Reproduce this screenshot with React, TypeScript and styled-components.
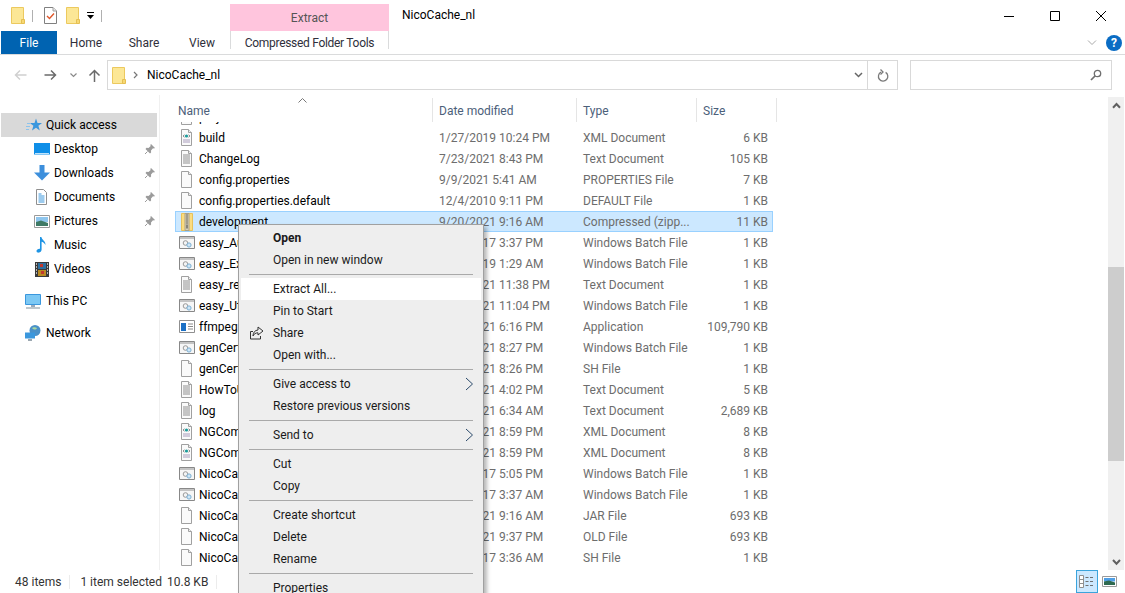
import React from 'react';
import styled, { createGlobalStyle } from 'styled-components';

const GlobalStyle = createGlobalStyle`
  html, body {
    margin: 0;
    padding: 0;
    background: #fff;
    overflow: hidden;
  }
  * { box-sizing: border-box; }
`;

type FileKind = 'xml' | 'text' | 'blank' | 'zip' | 'bat' | 'exe';

type FileRow = {
  name: string;
  date: string;
  type: string;
  size: string;
  kind: FileKind;
  selected?: boolean;
};

const files: FileRow[] = [
  { name: 'project', date: '', type: '', size: '', kind: 'xml' },
  { name: 'build', date: '1/27/2019 10:24 PM', type: 'XML Document', size: '6 KB', kind: 'xml' },
  { name: 'ChangeLog', date: '7/23/2021 8:43 PM', type: 'Text Document', size: '105 KB', kind: 'text' },
  { name: 'config.properties', date: '9/9/2021 5:41 AM', type: 'PROPERTIES File', size: '7 KB', kind: 'blank' },
  { name: 'config.properties.default', date: '12/4/2010 9:11 PM', type: 'DEFAULT File', size: '1 KB', kind: 'blank' },
  { name: 'development', date: '9/20/2021 9:16 AM', type: 'Compressed (zipp...', size: '11 KB', kind: 'zip', selected: true },
  { name: 'easy_Auto', date: '1/24/2017 3:37 PM', type: 'Windows Batch File', size: '1 KB', kind: 'bat' },
  { name: 'easy_Exec', date: '2/28/2019 1:29 AM', type: 'Windows Batch File', size: '1 KB', kind: 'bat' },
  { name: 'easy_readme', date: '3/11/2021 11:38 PM', type: 'Text Document', size: '1 KB', kind: 'text' },
  { name: 'easy_Util', date: '3/11/2021 11:04 PM', type: 'Windows Batch File', size: '1 KB', kind: 'bat' },
  { name: 'ffmpeg', date: '8/11/2021 6:16 PM', type: 'Application', size: '109,790 KB', kind: 'exe' },
  { name: 'genCert', date: '6/21/2021 8:27 PM', type: 'Windows Batch File', size: '1 KB', kind: 'bat' },
  { name: 'genCert', date: '6/21/2021 8:26 PM', type: 'SH File', size: '1 KB', kind: 'blank' },
  { name: 'HowToUse', date: '5/11/2021 4:02 PM', type: 'Text Document', size: '5 KB', kind: 'text' },
  { name: 'log', date: '9/21/2021 6:34 AM', type: 'Text Document', size: '2,689 KB', kind: 'text' },
  { name: 'NGCom', date: '7/21/2021 8:59 PM', type: 'XML Document', size: '8 KB', kind: 'xml' },
  { name: 'NGCom', date: '7/21/2021 8:59 PM', type: 'XML Document', size: '8 KB', kind: 'xml' },
  { name: 'NicoCache', date: '1/24/2017 5:05 PM', type: 'Windows Batch File', size: '1 KB', kind: 'bat' },
  { name: 'NicoCache', date: '1/24/2017 3:37 AM', type: 'Windows Batch File', size: '1 KB', kind: 'bat' },
  { name: 'NicoCache', date: '9/20/2021 9:16 AM', type: 'JAR File', size: '693 KB', kind: 'blank' },
  { name: 'NicoCache', date: '9/19/2021 9:37 PM', type: 'OLD File', size: '693 KB', kind: 'blank' },
  { name: 'NicoCache', date: '1/24/2017 3:36 AM', type: 'SH File', size: '1 KB', kind: 'blank' },
];

const FolderIcon = () => (
  <svg width="14" height="17" viewBox="0 0 14 17">
    <path d="M.5.500h12v16H.5z" fill="#fce796" stroke="#ecc95e" />
    <path d="M10.500 12.500h3v4h-3z" fill="#f7d873" stroke="#e5bf52" />
  </svg>
);

const CheckDocIcon = () => (
  <svg width="13" height="17" viewBox="0 0 13 17">
    <path d="M.5.500h8.500l3.500 3.500v12.500H.5z" fill="#fff" stroke="#808080" />
    <path d="M9 .5v3.500h3.500" fill="#e8e8e8" stroke="#a0a0a0" />
    <path d="M3 9l2.500 2.500L10 6.500" fill="none" stroke="#e0562a" strokeWidth="1.400" />
  </svg>
);

const FileIcon = ({ kind }: { kind: FileKind }) => {
  if (kind === 'zip') {
    return (
      <svg width="14" height="18" viewBox="0 0 14 18">
        <path d="M2.500.5h11v17h-11z" fill="#fbdc80" stroke="#e8c25a" />
        <path d="M6 .5h4v17H6z" fill="#d8d0b8" stroke="#a8a08a" />
        <path d="M7 2h2M7 4h2M7 6h2M7 8h2M7 10h2" stroke="#6f6a5c" />
        <path d="M7 11.500h2v4H7z" fill="#8a8578" />
      </svg>
    );
  }
  if (kind === 'bat') {
    return (
      <svg width="16" height="14" viewBox="0 0 16 14">
        <path d="M.5.500h15v12h-15z" fill="#f6f6f6" stroke="#888" />
        <path d="M1 1h14v2H1z" fill="#c4c4c4" />
        <circle cx="6.500" cy="7" r="2.300" fill="#f4f4f4" stroke="#9a9a9a" />
        <circle cx="10" cy="9" r="2.100" fill="#cfe6f6" stroke="#7cb0d4" />
      </svg>
    );
  }
  if (kind === 'exe') {
    return (
      <svg width="16" height="14" viewBox="0 0 16 14">
        <path d="M.5.500h15v12H.5z" fill="#fff" stroke="#8f8f8f" />
        <path d="M2 3h5v8H2z" fill="#1b6fc4" />
        <path d="M9 4h5M9 6.500h5M9 9h5" stroke="#8a8a8a" />
      </svg>
    );
  }
  return (
    <svg width="14" height="17" viewBox="0 0 14 17">
      <path d="M2.500.5h7l3 3v13h-10z" fill="#fafafa" stroke="#a0a0a0" />
      <path d="M9.500.5v3h3" fill="#eee" stroke="#a0a0a0" />
      {kind === 'text' && <path d="M4 5h7M4 7h7M4 9h7M4 11h7M4 13h7" stroke="#8f8f8f" />}
      {kind === 'xml' && (
        <>
          <path d="M4 11h7M4 13h7" stroke="#a89cbc" />
          <path d="M4 7l1.500-1.200M4 7l1.500 1.200M11 7L9.500 5.800M11 7L9.500 8.200" stroke="#8a8a8a" />
          <circle cx="7.500" cy="7" r="1.600" fill="#1c9b9b" />
        </>
      )}
    </svg>
  );
};

const PinIcon = () => (
  <svg width="12" height="12" viewBox="0 0 12 12">
    <path d="M7 1l4 4-1 .6-1-.4-2 2.200.1 2L6 10.500 1.500 6l1-1.200 2 .1 2.200-2-.4-1z" fill="#9b9b9b" />
    <path d="M3.500 8.500L1 11" stroke="#9b9b9b" />
  </svg>
);

const ChevronRight = () => (
  <svg width="9" height="14" viewBox="0 0 9 14">
    <path d="M1 1l6.500 6L1 13" fill="none" stroke="#2b4a6b" strokeWidth="1" />
  </svg>
);

const navEntries = [
  {
    label: 'Desktop',
    pinned: true,
    icon: (
      <svg width="16" height="14" viewBox="0 0 16 14">
        <path d="M0 1h16v11.500H0z" fill="#0f8fe8" />
        <path d="M1 11h14v1H1z" fill="#bfe3fb" />
      </svg>
    ),
  },
  {
    label: 'Downloads',
    pinned: true,
    icon: (
      <svg width="16" height="16" viewBox="0 0 16 16">
        <path d="M5.500 0h5v7.500H16L8 15.500 0 7.500h5.500z" fill="#3d8fdc" />
      </svg>
    ),
  },
  {
    label: 'Documents',
    pinned: true,
    icon: (
      <svg width="13" height="16" viewBox="0 0 13 16">
        <path d="M1.500.5h7l3 3v12h-10z" fill="#fff" stroke="#8f8f8f" />
        <path d="M3.500 5h3M3.500 7h6M3.500 9h6M3.500 11h6M3.500 13h6" stroke="#3a97dd" />
      </svg>
    ),
  },
  {
    label: 'Pictures',
    pinned: true,
    icon: (
      <svg width="16" height="13" viewBox="0 0 16 13">
        <path d="M.5.500h15v12H.5z" fill="#fff" stroke="#9a9a9a" />
        <path d="M2 2h12v5H2z" fill="#8fc6ee" />
        <path d="M2 7l5-1.500L14 8v3H2z" fill="#3f7a66" />
      </svg>
    ),
  },
  {
    label: 'Music',
    pinned: false,
    icon: (
      <svg width="14" height="16" viewBox="0 0 14 16">
        <path d="M5 0h1.400c.4 3 4.600 4 4 8-.8-2-2.600-3-3.800-3.200V12.600C6.600 14.600 4.800 16 3 15.600 1.200 15.200 1 13.400 2.400 12.400 3.200 11.800 4.200 11.600 5 11.800z" fill="#1e94e4" />
      </svg>
    ),
  },
  {
    label: 'Videos',
    pinned: false,
    icon: (
      <svg width="14" height="15" viewBox="0 0 14 15">
        <path d="M0 0h14v15H0z" fill="#3a3a3a" />
        <path d="M3 1h8v6H3z" fill="#2f6f9f" />
        <path d="M3 8h8v6H3z" fill="#b98a22" />
        <path d="M5 2h3v3H5zM6 9h3v3H6z" fill="#c2382c" />
        <path d="M1 2h1M1 5h1M1 8h1M1 11h1M12 2h1M12 5h1M12 8h1M12 11h1" stroke="#ddd" strokeWidth="1.400" />
      </svg>
    ),
  },
];

const App = () => {
  return (
    <Page>
      <GlobalStyle />
      <TitleBar>
        <QuickAccess>
          <FolderIcon />
          <QatBar />
          <QatCheck><CheckDocIcon /></QatCheck>
          <FolderIcon />
          <svg width="7" height="8" viewBox="0 0 7 8">
            <path d="M0 .5h7" stroke="#000" />
            <path d="M0 3h7L3.500 7z" fill="#000" />
          </svg>
          <QatBar />
        </QuickAccess>
        <ContextHeader>Extract</ContextHeader>
        <WindowTitle>NicoCache_nl</WindowTitle>
        <WindowButtons>
          <WindowButton>
            <svg width="10" height="10" viewBox="0 0 10 10"><path d="M0 5.500h10" stroke="#000" /></svg>
          </WindowButton>
          <WindowButton>
            <svg width="10" height="10" viewBox="0 0 10 10"><path d="M.5.500h9v9h-9z" fill="none" stroke="#000" /></svg>
          </WindowButton>
          <WindowButton>
            <svg width="10" height="10" viewBox="0 0 10 10"><path d="M0 0l10 10M10 0L0 10" stroke="#000" /></svg>
          </WindowButton>
        </WindowButtons>
      </TitleBar>

      <RibbonTabs>
        <FileTab>File</FileTab>
        <RibbonTab>Home</RibbonTab>
        <RibbonTab>Share</RibbonTab>
        <RibbonTab>View</RibbonTab>
        <ContextTab>Compressed Folder Tools</ContextTab>
        <RibbonRight>
          <svg width="10" height="6" viewBox="0 0 10 6">
            <path d="M1 .5l4 4 4-4" fill="none" stroke="#a8a8a8" />
          </svg>
          <HelpBadge>?</HelpBadge>
        </RibbonRight>
      </RibbonTabs>

      <AddressRow>
        <NavButtons>
          <svg width="13" height="12" viewBox="0 0 13 12">
            <path d="M12.500 6H1.500M6 1.500L1.500 6 6 10.500" fill="none" stroke="#d0d0d0" strokeWidth="1.500" />
          </svg>
          <NavForward>
            <svg width="13" height="12" viewBox="0 0 13 12">
              <path d="M.5 6h11M7 1.500L11.500 6 7 10.500" fill="none" stroke="#6b6b6b" strokeWidth="1.500" />
            </svg>
          </NavForward>
          <svg width="7" height="5" viewBox="0 0 7 5">
            <path d="M.5.500L3.500 3.500 6.500.500" fill="none" stroke="#8a8a8a" strokeWidth="1.200" />
          </svg>
          <svg width="13" height="13" viewBox="0 0 13 13">
            <path d="M6.500 13V1.500M1.500 6.500l5-5 5 5" fill="none" stroke="#6b6b6b" strokeWidth="1.500" />
          </svg>
        </NavButtons>
        <AddressBox>
          <FolderIcon />
          <svg width="5" height="8" viewBox="0 0 5 8">
            <path d="M1 1l3 3-3 3" fill="none" stroke="#777" strokeWidth="1.200" />
          </svg>
          <AddressText>NicoCache_nl</AddressText>
          <AddressEnd>
            <svg width="9" height="6" viewBox="0 0 9 6">
              <path d="M1 1l3.500 3.500L8 1" fill="none" stroke="#666" strokeWidth="1.500" />
            </svg>
          </AddressEnd>
          <RefreshCell>
            <svg width="12" height="13" viewBox="0 0 12 13">
              <path d="M4 3.200A4.700 4.700 0 1 0 8.600 3.400" fill="none" stroke="#7a7a7a" strokeWidth="1.300" />
              <path d="M3.500.5L6 3 3.500 5.500" fill="none" stroke="#7a7a7a" strokeWidth="1.300" />
            </svg>
          </RefreshCell>
        </AddressBox>
        <SearchBox>
          <svg width="12" height="12" viewBox="0 0 12 12">
            <circle cx="7.500" cy="4.500" r="3.200" fill="none" stroke="#6f6f6f" strokeWidth="1.300" />
            <path d="M5 7L1 11" stroke="#6f6f6f" strokeWidth="1.700" />
          </svg>
        </SearchBox>
      </AddressRow>

      <MainArea>
        <Sidebar>
          <QuickRow>
            <svg width="16" height="15" viewBox="0 0 16 15">
              <path d="M10 .5l1.500 4.500H16l-3.600 2.800 1.400 4.700L10 9.700 6 12.500l1.400-4.700L3.800 5h4.700z" fill="#3a97dd" />
              <path d="M1 5.500h4M0 8.500h4M0 11.500h3" stroke="#8cc3ec" />
            </svg>
            Quick access
          </QuickRow>
          {navEntries.map((entry) => (
            <NavRow key={entry.label}>
              <NavIcon>{entry.icon}</NavIcon>
              <NavLabel>{entry.label}</NavLabel>
              {entry.pinned && <PinIcon />}
            </NavRow>
          ))}
          <NavRoot>
            <svg width="16" height="15" viewBox="0 0 16 15">
              <path d="M.5.500h15v10H.5z" fill="#7cc8f4" stroke="#3a97dd" />
              <path d="M6 11h4v2H6z" fill="#9ab" />
              <path d="M1 14h14" stroke="#a8b4bc" strokeWidth="1.500" />
            </svg>
            This PC
          </NavRoot>
          <NavRoot>
            <svg width="16" height="16" viewBox="0 0 16 16">
              <circle cx="10" cy="5.500" r="5.500" fill="#4a90c8" />
              <path d="M7 3c2-1.500 4 0 5 0-1 2-3 2-5 0z" fill="#a8d8a0" />
              <path d="M0 7.500h10v6H0z" fill="#3a97dd" />
              <path d="M3 15h4" stroke="#7a8a96" strokeWidth="1.500" />
            </svg>
            Network
          </NavRoot>
        </Sidebar>

        <FilePane>
          <HeaderRow>
            <SortCaret>
              <svg width="9" height="5" viewBox="0 0 9 5">
                <path d="M.5 4.500l4-4 4 4" fill="none" stroke="#777" />
              </svg>
            </SortCaret>
            <NameHeader>Name</NameHeader>
            <HeaderCell $width={144}>Date modified</HeaderCell>
            <HeaderCell $width={120}>Type</HeaderCell>
            <HeaderCell $width={80}>Size</HeaderCell>
          </HeaderRow>
          <RowsClip>
            <Rows>
              {files.map((f, i) => (
                <Row key={i} $selected={f.selected}>
                  <NameCell>
                    <IconSlot><FileIcon kind={f.kind} /></IconSlot>
                    {f.name}
                  </NameCell>
                  <DateCell>{f.date}</DateCell>
                  <TypeCell>{f.type}</TypeCell>
                  <SizeCell>{f.size}</SizeCell>
                </Row>
              ))}
            </Rows>
          </RowsClip>
        </FilePane>

        <ScrollTrack>
          <ScrollArrowUp>
            <svg width="9" height="7" viewBox="0 0 9 7">
              <path d="M1 5.800l3.500-3.800L8 5.800" fill="none" stroke="#606060" strokeWidth="2" />
            </svg>
          </ScrollArrowUp>
          <ScrollThumb />
          <ScrollArrowDown>
            <svg width="9" height="7" viewBox="0 0 9 7">
              <path d="M1 1l3.500 3.800L8 1" fill="none" stroke="#606060" strokeWidth="2" />
            </svg>
          </ScrollArrowDown>
        </ScrollTrack>
      </MainArea>

      <StatusBar>
        <StatusText>48 items</StatusText>
        <StatusSep />
        <StatusText>1 item selected</StatusText>
        <StatusText>10.8 KB</StatusText>
        <StatusSep />
        <ViewToggles>
          <ViewButton $active>
            <svg width="17" height="13" viewBox="0 0 17 13">
              <path d="M.5.500h4v12h-4zM.5 4.500h4M.5 8.500h4" fill="#fff" stroke="#8f8f8f" />
              <path d="M6.500 2.500h3M11 2.500h3M6.500 6.500h3M11 6.500h3M6.500 10.500h3M11 10.500h3" stroke="#6f6f6f" />
            </svg>
          </ViewButton>
          <ViewButton>
            <svg width="15" height="11" viewBox="0 0 15 11">
              <path d="M.5.500h14v10H.5z" fill="#fff" stroke="#9a9a9a" />
              <path d="M2 2h11v3.500H2z" fill="#4f9fe6" />
              <path d="M2 5.500l5-1 6 2V9H2z" fill="#2f6a50" />
            </svg>
          </ViewButton>
        </ViewToggles>
      </StatusBar>

      <ContextMenu>
        <MenuItem $bold>Open</MenuItem>
        <MenuItem>Open in new window</MenuItem>
        <MenuSep />
        <MenuItem $active>Extract All...</MenuItem>
        <MenuItem>Pin to Start</MenuItem>
        <MenuItem>
          <MenuIcon>
            <svg width="15" height="14" viewBox="0 0 15 14">
              <path d="M4 5.500H1.500v7.500h10V10" fill="none" stroke="#333" />
              <path d="M9 1l5 4-5 4V6.800C6.500 6.800 5 8 4 10c0-3.500 2-5.800 5-6z" fill="none" stroke="#333" />
            </svg>
          </MenuIcon>
          Share
        </MenuItem>
        <MenuItem>Open with...</MenuItem>
        <MenuSep />
        <MenuItem>Give access to<ChevronSlot><ChevronRight /></ChevronSlot></MenuItem>
        <MenuItem>Restore previous versions</MenuItem>
        <MenuSep />
        <MenuItem>Send to<ChevronSlot><ChevronRight /></ChevronSlot></MenuItem>
        <MenuSep />
        <MenuItem>Cut</MenuItem>
        <MenuItem>Copy</MenuItem>
        <MenuSep />
        <MenuItem>Create shortcut</MenuItem>
        <MenuItem>Delete</MenuItem>
        <MenuItem>Rename</MenuItem>
        <MenuSep />
        <MenuItem>Properties</MenuItem>
      </ContextMenu>
    </Page>
  );
};

export default App;

const Page = styled.div`
  position: relative;
  width: 1125px;
  height: 593px;
  overflow: hidden;
  display: flex;
  flex-direction: column;
  background: #fff;
  color: #000;
  font-family: Roboto, "Open Sans", sans-serif;
  font-size: 12px;
`;

const TitleBar = styled.div`
  display: flex;
  height: 31px;
  flex: none;
`;

const QuickAccess = styled.div`
  display: flex;
  align-items: center;
  gap: 7px;
  width: 230px;
  padding: 0 0 0 11px;
`;

const QatBar = styled.span`
  width: 1px;
  height: 12px;
  background: #b0b0b0;
  margin-right: 4px;
`;

const QatCheck = styled.span`
  margin-right: 2px;
  line-height: 0;
`;

const ContextHeader = styled.div`
  margin-top: 4px;
  width: 159px;
  background: #ffc5dd;
  color: #555;
  display: flex;
  align-items: center;
  justify-content: center;
`;

const WindowTitle = styled.div`
  padding: 7px 0 0 13px;
  line-height: 17px;
`;

const WindowButtons = styled.div`
  margin-left: auto;
  padding-right: 1px;
  display: flex;
`;

const WindowButton = styled.div`
  width: 46px;
  height: 31px;
  display: flex;
  align-items: center;
  justify-content: center;
`;

const RibbonTabs = styled.div`
  display: flex;
  height: 24px;
  flex: none;
  padding-left: 1px;
  border-bottom: 1px solid #dadbdc;
  color: #2f2f3b;
`;

const FileTab = styled.div`
  width: 56px;
  background: #0063b1;
  color: #fff;
  display: flex;
  align-items: center;
  justify-content: center;
`;

const RibbonTab = styled.div`
  width: 58px;
  display: flex;
  align-items: center;
  justify-content: center;
`;

const ContextTab = styled.div`
  margin-left: -1px;
  width: 159px;
  height: 23px;
  letter-spacing: -0.3px;
  border-left: 1px solid #dadbdc;
  border-right: 1px solid #dadbdc;
  display: flex;
  align-items: center;
  justify-content: center;
  border-image: linear-gradient(to bottom, #dadbdc 75%, transparent 75%) 1;
`;

const RibbonRight = styled.div`
  margin-left: auto;
  display: flex;
  align-items: center;
  gap: 9px;
  padding-right: 3px;
`;

const HelpBadge = styled.div`
  width: 16px;
  height: 16px;
  border-radius: 50%;
  background: #0a6cc4;
  color: #fff;
  font-weight: 700;
  font-size: 12px;
  line-height: 16px;
  text-align: center;
`;

const AddressRow = styled.div`
  display: flex;
  align-items: center;
  height: 40px;
  flex: none;
  padding: 0 13px 0 14px;
`;

const NavButtons = styled.div`
  display: flex;
  align-items: center;
  gap: 11px;
  width: 93px;
`;

const NavForward = styled.span`
  margin-left: 6px;
  margin-right: 2px;
  line-height: 0;
`;

const AddressBox = styled.div`
  width: 791px;
  height: 30px;
  border: 1px solid #d9d9d9;
  display: flex;
  align-items: center;
  padding-left: 4px;
  gap: 7px;
`;

const AddressText = styled.span`
  flex: 1;
  margin-left: 2px;
`;

const AddressEnd = styled.div`
  width: 18px;
  display: flex;
  justify-content: center;
`;

const RefreshCell = styled.div`
  width: 30px;
  height: 28px;
  margin-left: -7px;
  border-left: 1px solid #d9d9d9;
  display: flex;
  align-items: center;
  justify-content: center;
`;

const SearchBox = styled.div`
  margin-left: 12px;
  width: 202px;
  height: 30px;
  border: 1px solid #d9d9d9;
  display: flex;
  align-items: center;
  justify-content: flex-end;
  padding-right: 9px;
`;

const MainArea = styled.div`
  flex: 1;
  min-height: 0;
  display: flex;
`;

const Sidebar = styled.div`
  width: 160px;
  flex: none;
  padding: 18px 2px 0 1px;
  border-right: 1px solid #f0f0f0;
`;

const QuickRow = styled.div`
  height: 24px;
  background: #d9d9d9;
  display: flex;
  align-items: center;
  gap: 4px;
  padding-left: 25px;
`;

const NavRow = styled.div`
  height: 24px;
  display: flex;
  align-items: center;
  padding: 0 1px 0 32px;
`;

const NavIcon = styled.span`
  width: 21px;
  display: flex;
  justify-content: center;
  padding-right: 4px;
`;

const NavLabel = styled.span`
  flex: 1;
`;

const NavRoot = styled.div`
  height: 24px;
  margin-top: 8px;
  display: flex;
  align-items: center;
  gap: 5px;
  padding-left: 24px;
`;

const FilePane = styled.div`
  flex: 1;
  min-width: 0;
  padding: 3px 0 0 15px;
  display: flex;
  flex-direction: column;
`;

const HeaderRow = styled.div`
  position: relative;
  height: 24px;
  display: flex;
  flex: none;
  color: #4c607a;
`;

const SortCaret = styled.span`
  position: absolute;
  left: 123px;
  top: 0;
  line-height: 0;
`;

const HeaderCell = styled.div<{ $width: number }>`
  width: ${(p) => p.$width}px;
  padding: 1px 0 0 6px;
  border-right: 1px solid #e5e5e5;
  display: flex;
  align-items: center;
`;

const NameHeader = styled(HeaderCell).attrs({ $width: 258 })`
  padding-left: 3px;
`;

const RowsClip = styled.div`
  flex: 1;
  min-height: 0;
  overflow: hidden;
`;

const Rows = styled.div`
  margin-top: -16px;
`;

const Row = styled.div<{ $selected?: boolean }>`
  display: flex;
  align-items: center;
  width: 598px;
  height: 21px;
  color: #6d6d6d;
  background: ${(p) => (p.$selected ? '#cce8ff' : 'transparent')};
  box-shadow: ${(p) => (p.$selected ? 'inset 0 0 0 1px #99d1ff' : 'none')};
`;

const NameCell = styled.div`
  width: 258px;
  display: flex;
  align-items: center;
  color: #000;
  white-space: nowrap;
`;

const IconSlot = styled.span`
  width: 24px;
  padding-left: 4px;
  display: flex;
  align-items: center;
`;

const DateCell = styled.div`
  width: 144px;
  padding-left: 6px;
`;

const TypeCell = styled.div`
  width: 114px;
  padding-left: 6px;
  white-space: nowrap;
`;

const SizeCell = styled.div`
  width: 77px;
  text-align: right;
  white-space: nowrap;
`;

const ScrollTrack = styled.div`
  width: 16px;
  flex: none;
  margin-right: 1px;
  margin-top: 2px;
  background: #f0f0f0;
  position: relative;
`;

const ScrollThumb = styled.div`
  position: absolute;
  top: 170px;
  left: 0;
  right: 0;
  height: 194px;
  background: #cdcdcd;
`;

const ScrollArrowUp = styled.div`
  position: absolute;
  left: 4px;
  top: 5px;
  line-height: 0;
`;

const ScrollArrowDown = styled.div`
  position: absolute;
  left: 4px;
  bottom: 4px;
  line-height: 0;
`;

const StatusBar = styled.div`
  height: 23px;
  flex: none;
  display: flex;
  align-items: center;
  padding-left: 15px;
  color: #333;
`;

const StatusText = styled.span`
  margin-right: 5px;
`;

const StatusSep = styled.span`
  width: 1px;
  height: 14px;
  background: #ececec;
  margin: 0 10px 0 3px;
`;

const ViewToggles = styled.div`
  margin-left: auto;
  display: flex;
  align-items: center;
  gap: 4px;
  padding-right: 8px;
`;

const ViewButton = styled.div<{ $active?: boolean }>`
  width: ${(p) => (p.$active ? 22 : 15)}px;
  height: 23px;
  display: flex;
  align-items: center;
  justify-content: center;
  background: ${(p) => (p.$active ? '#cce8ff' : 'transparent')};
  border: ${(p) => (p.$active ? '1px solid #3ba4dc' : 'none')};
`;

const ContextMenu = styled.div`
  position: absolute;
  left: 238px;
  top: 224px;
  width: 246px;
  height: 380px;
  padding: 2px;
  background: #eeeeee;
  border: 1px solid #a0a0a0;
  box-shadow: 3px 3px 4px rgba(0, 0, 0, 0.28);
`;

const MenuItem = styled.div<{ $bold?: boolean; $active?: boolean }>`
  position: relative;
  height: 22px;
  display: flex;
  align-items: center;
  padding-left: 32px;
  color: #1a1a1a;
  font-weight: ${(p) => (p.$bold ? 700 : 400)};
  background: ${(p) => (p.$active ? '#fff' : 'transparent')};
`;

const MenuSep = styled.div`
  height: 1px;
  margin: 3px 8px;
  background: #a9a9a9;
`;

const MenuIcon = styled.span`
  position: absolute;
  left: 8px;
  top: 4px;
  line-height: 0;
`;

const ChevronSlot = styled.span`
  position: absolute;
  right: 7px;
  top: 4px;
  line-height: 0;
`;
